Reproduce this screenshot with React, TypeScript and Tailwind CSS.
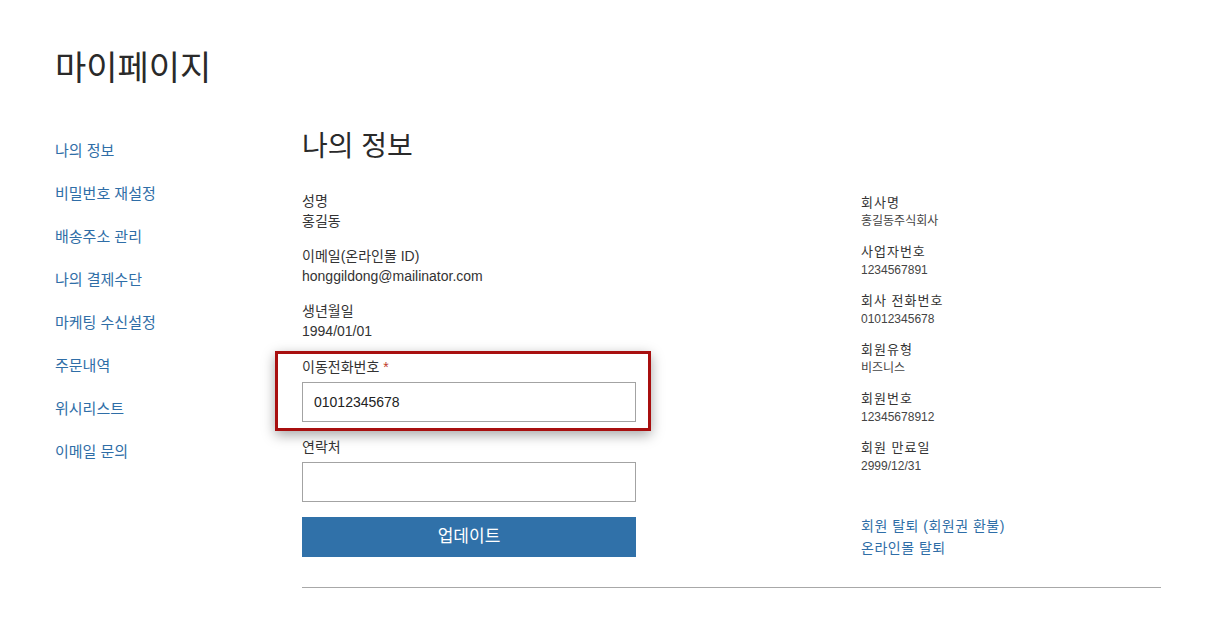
import React from 'react';

const menu = ['나의 정보', '비밀번호 재설정', '배송주소 관리', '나의 결제수단', '마케팅 수신설정', '주문내역', '위시리스트', '이메일 문의'];

const company = [
  { label: '회사명', value: '홍길동주식회사' },
  { label: '사업자번호', value: '1234567891' },
  { label: '회사 전화번호', value: '01012345678' },
  { label: '회원유형', value: '비즈니스' },
  { label: '회원번호', value: '12345678912' },
  { label: '회원 만료일', value: '2999/12/31' },
];

const Info = ({ label, value }: { label: string; value: string }) => (
  <div>
    <div className="text-[14px] leading-[20px]">{label}</div>
    <div className="text-[14px] leading-[20px]">{value}</div>
  </div>
);

export default function App() {
  return (
    <div
      className="min-h-[617px] bg-white text-[#333] pl-[55px] pt-[46px]"
      style={{ fontFamily: '"Liberation Sans", "Noto Sans CJK KR", sans-serif' }}
    >
      <h1 className="text-[34px] leading-[44px] font-normal text-[#2a2a2a]">마이페이지</h1>

      <div className="flex mt-[39px]">
        {/* Sidebar */}
        <nav className="w-[247px] shrink-0 pt-[12px] flex flex-col gap-[23px]">
          {menu.map((m) => (
            <a key={m} className="text-[15px] leading-[20px] text-[#2f6ea7] cursor-pointer">
              {m}
            </a>
          ))}
        </nav>

        {/* Main */}
        <div className="w-[859px] shrink-0">
          <h2 className="text-[28px] leading-[36px] text-[#2a2a2a]">나의 정보</h2>

          <div className="flex mt-[26px]">
            <div className="w-[334px] shrink-0">
              <div className="flex flex-col gap-[15px]">
                <Info label="성명" value="홍길동" />
                <Info label="이메일(온라인몰 ID)" value="honggildong@mailinator.com" />
                <Info label="생년월일" value="1994/01/01" />
              </div>

              <div className="mt-[10px] -ml-[27px] -mr-[15px] border-[3px] border-[#a80f0f] pl-[24px] pr-[12px] pt-[3px] pb-[6px] shadow-[0_4px_12px_rgba(0,0,0,0.35)]">
                <div className="text-[14px] leading-[20px]">
                  이동전화번호 <span className="text-[#c0392b]">*</span>
                </div>
                <input
                  readOnly
                  value="01012345678"
                  className="mt-[5px] w-full h-[40px] border border-[#a3a3a3] px-[11px] text-[14px] text-[#222] outline-none"
                />
              </div>

              <div className="mt-[6px] text-[14px] leading-[20px]">연락처</div>
              <input readOnly className="mt-[5px] w-full h-[40px] border border-[#a3a3a3] px-[11px] text-[14px] outline-none" />

              <button className="mt-[15px] w-full h-[40px] bg-[#3071a9] text-white text-[17px]">업데이트</button>
            </div>

            <div className="ml-[225px] pt-[3px] flex flex-col">
              <div className="flex flex-col gap-[13px]">
                {company.map((c) => (
                  <div key={c.label}>
                    <div className="text-[13px] leading-[18px] tracking-[1px]">{c.label}</div>
                    <div className="text-[12px] leading-[18px] text-[#444]">{c.value}</div>
                  </div>
                ))}
              </div>
              <div className="mt-[40px] flex flex-col text-[14px] leading-[22px] text-[#2f6ea7] tracking-[0.5px]">
                <a className="cursor-pointer">회원 탈퇴 (회원권 환불)</a>
                <a className="cursor-pointer">온라인몰 탈퇴</a>
              </div>
            </div>
          </div>

          <div className="mt-[28px] border-t border-[#a8a8a8]" />
        </div>
      </div>
    </div>
  );
}
